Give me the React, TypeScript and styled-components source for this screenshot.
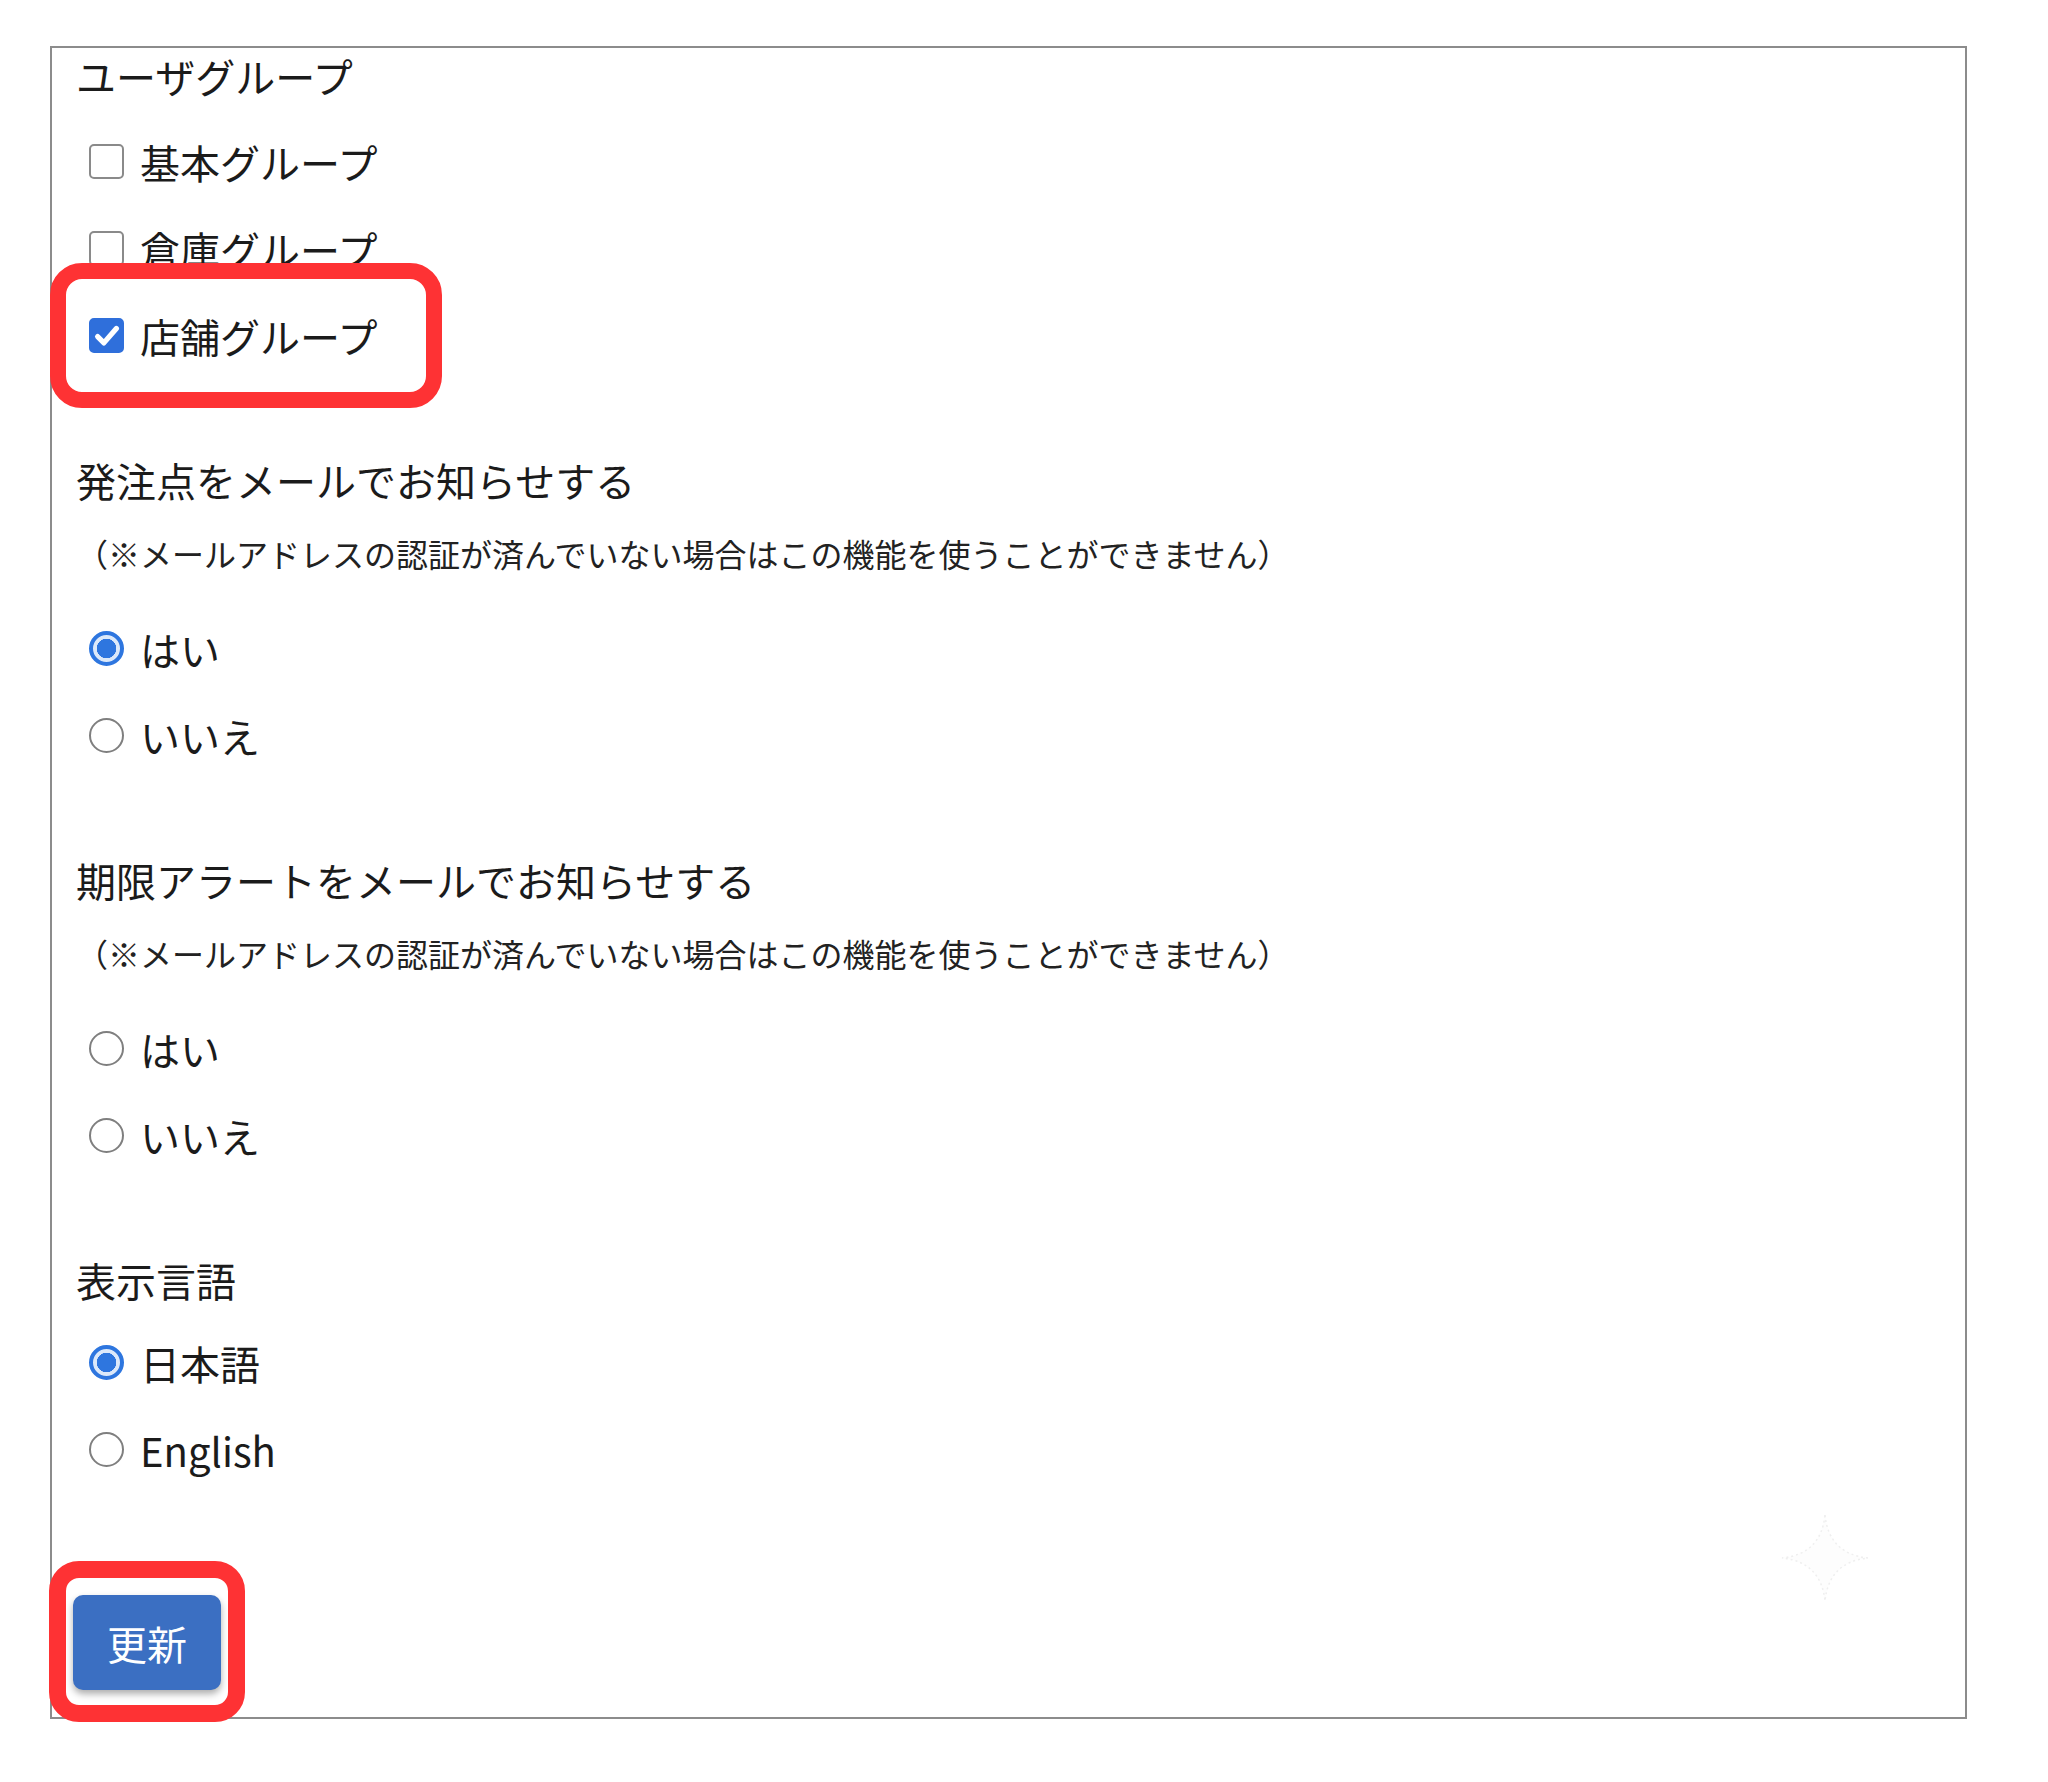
import React from 'react'
import styled, { createGlobalStyle } from 'styled-components'

const GlobalStyle = createGlobalStyle`
  html, body {
    margin: 0;
    padding: 0;
    background: #ffffff;
  }
  body {
    font-family: 'Noto Sans CJK JP', 'Noto Sans', sans-serif;
    color: #1b1b1b;
  }
  * {
    box-sizing: border-box;
  }
`

const Page = styled.div`
  position: relative;
  height: 1782px;
  padding: 46px 0 0 50px;
`

const Panel = styled.form`
  width: 1917px;
  border: 2px solid #8c8c8c;
  padding: 0 24px;
  display: flex;
  flex-direction: column;
  align-items: flex-start;
`

const Section = styled.div<{ $top: number }>`
  display: flex;
  flex-direction: column;
  align-items: flex-start;
  margin-top: ${({ $top }) => $top}px;
`

const Heading = styled.div`
  font-size: 40px;
  line-height: 57px;
  height: 64px;
  white-space: nowrap;
`

const Note = styled.div`
  font-size: 32px;
  line-height: 50px;
  height: 50px;
  margin-top: 12px;
  white-space: nowrap;
  color: #222;
`

const OptionList = styled.div<{ $top: number }>`
  display: flex;
  flex-direction: column;
  margin-top: ${({ $top }) => $top}px;
`

const OptionRow = styled.label`
  display: flex;
  align-items: center;
  gap: 16px;
  height: 87px;
  padding-left: 13px;
  font-size: 40px;
  white-space: nowrap;
  cursor: pointer;
`

const Highlight = styled.div<{ $radius: number }>`
  position: relative;
  z-index: 1;
  background: #ffffff;
  border: 16px solid #fe3234;
  border-radius: ${({ $radius }) => $radius}px;
`

const RowHighlight = styled(Highlight)`
  width: 392px;
  margin: -29px 0 -29px -26px;
  padding: 13px 0 13px 10px;
`

const ButtonHighlight = styled(Highlight)`
  border-width: 17px;
  margin: 68px 0 -5px -27px;
  padding: 17px 7px 15px 7px;
`

const Box = styled.span<{ $checked: boolean }>`
  display: inline-flex;
  align-items: center;
  justify-content: center;
  flex: none;
  width: 35px;
  height: 35px;
  border-radius: 5px;
  border: 2.5px solid ${({ $checked }) => ($checked ? '#2f6fdb' : '#8a8a8a')};
  background: ${({ $checked }) => ($checked ? '#2f6fdb' : '#ffffff')};
`

const Radio = styled.span<{ $checked: boolean }>`
  flex: none;
  width: 35px;
  height: 35px;
  border-radius: 50%;
  border: ${({ $checked }) => ($checked ? '4px solid #2e76df' : '2.5px solid #7f7f7f')};
  background: ${({ $checked }) =>
    $checked ? 'radial-gradient(circle, #2e76df 0 9.5px, #dce9fa 10px)' : '#ffffff'};
`

const SubmitButton = styled.button`
  display: block;
  width: 148px;
  height: 95px;
  border: none;
  border-radius: 10px;
  background: #3b6fc2;
  color: #ffffff;
  font-family: inherit;
  font-size: 40px;
  box-shadow: 0 4px 7px rgba(0, 0, 0, 0.32);
  cursor: pointer;
`

const Sparkle = styled.svg`
  position: absolute;
  left: 1780px;
  top: 1513px;
  width: 90px;
  height: 90px;
`

function CheckOption({ label, checked = false }: { label: string; checked?: boolean }) {
  return (
    <OptionRow>
      <Box $checked={checked}>
        {checked && (
          <svg width="30" height="30" viewBox="0 0 24 24">
            <polyline points="4.5 12.5 9.5 17.5 19.5 6" fill="none" stroke="#fff" strokeWidth="4.2" strokeLinecap="round" strokeLinejoin="round" />
          </svg>
        )}
      </Box>
      {label}
    </OptionRow>
  )
}

function RadioOption({ label, checked = false }: { label: string; checked?: boolean }) {
  return (
    <OptionRow>
      <Radio $checked={checked} />
      {label}
    </OptionRow>
  )
}

const NOTE = '（※メールアドレスの認証が済んでいない場合はこの機能を使うことができません）'

export default function App() {
  return (
    <Page>
      <GlobalStyle />
      <Panel onSubmit={(e) => e.preventDefault()}>
        <Section $top={0}>
          <Heading>ユーザグループ</Heading>
          <OptionList $top={6}>
            <CheckOption label="基本グループ" />
            <CheckOption label="倉庫グループ" />
            <RowHighlight $radius={32}>
              <CheckOption label="店舗グループ" checked />
            </RowHighlight>
          </OptionList>
        </Section>

        <Section $top={73}>
          <Heading>発注点をメールでお知らせする</Heading>
          <Note>{NOTE}</Note>
          <OptionList $top={27}>
            <RadioOption label="はい" checked />
            <RadioOption label="いいえ" />
          </OptionList>
        </Section>

        <Section $top={73}>
          <Heading>期限アラートをメールでお知らせする</Heading>
          <Note>{NOTE}</Note>
          <OptionList $top={27}>
            <RadioOption label="はい" />
            <RadioOption label="いいえ" />
          </OptionList>
        </Section>

        <Section $top={73}>
          <Heading>表示言語</Heading>
          <OptionList $top={3}>
            <RadioOption label="日本語" checked />
            <RadioOption label="English" />
          </OptionList>
        </Section>

        <ButtonHighlight $radius={30}>
          <SubmitButton type="submit">更新</SubmitButton>
        </ButtonHighlight>
      </Panel>
      <Sparkle viewBox="0 0 90 90">
        <path
          d="M45 2 Q49 41 88 45 Q49 49 45 88 Q41 49 2 45 Q41 41 45 2 Z"
          fill="#fdfdfd"
          stroke="#efefef"
          strokeWidth="1.5"
          strokeDasharray="2 3"
        />
      </Sparkle>
    </Page>
  )
}
